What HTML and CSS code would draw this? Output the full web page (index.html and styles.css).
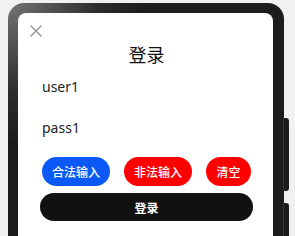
FILE: index.html
```html
<!DOCTYPE html>
<html lang="zh">
<head>
    <meta charset="UTF-8">
    <meta name="viewport" content="width=device-width, initial-scale=1.0">
    <title>登录</title>
    <link rel="stylesheet" href="styles.css">
</head>
<body>

    <div class="phone">
        <div class="side-btn side-btn-top"></div>
        <div class="side-btn side-btn-bottom"></div>

        <div class="screen">
            <div class="close">
                <svg width="12" height="12" viewBox="0 0 12 12">
                    <path d="M0.5 0.5 L11.5 11.5 M11.5 0.5 L0.5 11.5" stroke="#8a8a8a" stroke-width="1.1" fill="none"/>
                </svg>
            </div>

            <h2 class="title">登录</h2>

            <div class="field">user1</div>
            <div class="field">pass1</div>

            <div class="actions">
                <button class="btn btn-blue">合法输入</button>
                <button class="btn btn-red">非法输入</button>
                <button class="btn btn-red btn-small">清空</button>
            </div>

            <button class="login-btn">登录</button>
        </div>
    </div>

</body>
</html>
```

FILE: styles.css
```css
body {
    margin: 0;
    padding: 0;
    background-color: #f1f1f1;
    font-family: "Noto Sans", "Noto Sans CJK SC", sans-serif;
    color: #182431;
    overflow: hidden;
}
.phone {
    position: relative;
    width: 255px;
    height: 260px;
    margin: 3px 0 0 8px;
    padding: 10px 11px 0 10px;
    border-radius: 16px;
    background: radial-gradient(circle at 0 0, #747474 0, #2c2c2c 90px, #1c1c1c 140px);
}
.side-btn {
    position: absolute;
    right: -5px;
    width: 5px;
    background-color: #1c1c1c;
    border-left: 1px solid #333;
    border-radius: 0 3px 3px 0;
}
.side-btn-top {
    top: 115px;
    height: 73px;
}
.side-btn-bottom {
    top: 200px;
    height: 60px;
}
.screen {
    height: 100%;
    background-color: #fff;
    border-radius: 8px 8px 0 0;
    padding: 0 20px 0 22px;
}
.close {
    padding-top: 12px;
    margin-left: -10px;
    height: 12px;
}
.close svg {
    display: block;
}
.title {
    margin: 6px 0 0 0;
    font-size: 18px;
    line-height: 24px;
    font-weight: 400;
    text-align: center;
    color: #111;
}
.field {
    height: 41px;
    line-height: 40px;
    padding-left: 2px;
    font-size: 14px;
    color: #222;
}
.field:first-of-type {
    margin-top: 2px;
}
.actions {
    display: flex;
    justify-content: space-between;
    padding: 0 2px;
    margin-top: 8px;
}
.btn {
    width: 68px;
    height: 29px;
    border: none;
    border-radius: 15px;
    color: #fff;
    font-family: "Noto Sans CJK SC", sans-serif;
    font-size: 12px;
    font-weight: 500;
    padding: 0;
}
.btn-blue {
    background-color: #0a59f7;
}
.btn-red {
    background-color: #ff0000;
}
.btn-small {
    width: 45px;
}
.login-btn {
    display: block;
    width: 100%;
    height: 28px;
    margin-top: 7px;
    border: none;
    border-radius: 14px;
    background-color: #111;
    color: #fff;
    font-family: "Noto Sans CJK SC", sans-serif;
    font-size: 12px;
    font-weight: 700;
}
```
